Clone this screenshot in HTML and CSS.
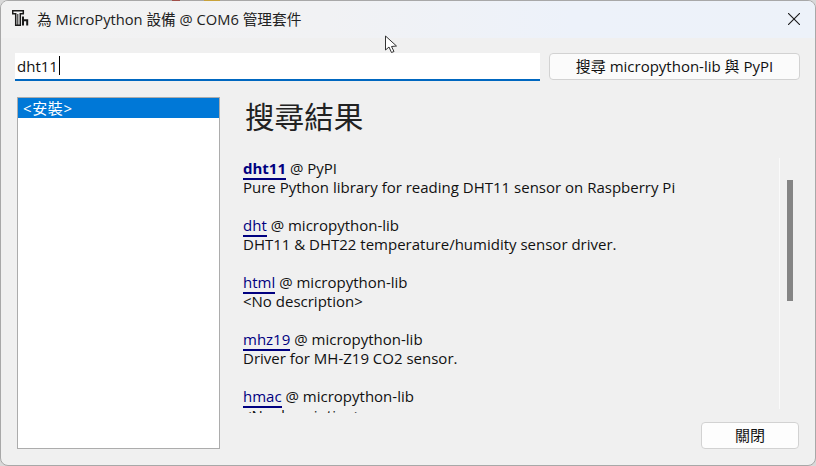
FILE: index.html
```html
<!DOCTYPE html>
<html lang="zh-Hant">
<head>
<meta charset="utf-8">
<title>為 MicroPython 設備 @ COM6 管理套件</title>
<link rel="stylesheet" href="styles.css">
</head>
<body>
<div class="window">
  <header class="titlebar">
    <svg class="app-icon" width="17" height="16" viewBox="0 0 17 16" fill="none" stroke="#1a1a1a">
      <path d="M.7 .8V3.800H3.700V15.200H8.300V3.800H11.300V.8z" stroke-width="1.500"/>
      <path d="M5.800 4V15" stroke-width="1"/>
      <path d="M11 6.500V15.500M11 10.200H15.200V15.500" stroke-width="2"/>
    </svg>
    <span class="title">為 MicroPython 設備 @ COM6 管理套件</span>
    <svg class="close-icon" width="12" height="12" viewBox="0 0 12 12" stroke="#1a1a1a" stroke-width="1.100"><path d="M0 0L12 12M12 0L0 12"/></svg>
  </header>
  <main class="content">
    <div class="search-row">
      <div class="search-input"><span>dht11</span><i class="caret"></i></div>
      <button class="btn search-btn">搜尋 micropython-lib 與 PyPI</button>
    </div>
    <div class="panes">
      <div class="list"><div class="list-item">&lt;安裝&gt;</div></div>
      <div class="details">
        <h1 class="heading">搜尋結果</h1>
        <div class="results-wrap">
          <div class="results">
            <p class="result"><a class="top">dht11</a> @ PyPI<br>Pure Python library for reading DHT11 sensor on Raspberry Pi</p>
            <p class="result"><a>dht</a> @ micropython-lib<br>DHT11 &amp; DHT22 temperature/humidity sensor driver.</p>
            <p class="result"><a>html</a> @ micropython-lib<br>&lt;No description&gt;</p>
            <p class="result"><a>mhz19</a> @ micropython-lib<br>Driver for MH-Z19 CO2 sensor.</p>
            <p class="result"><a>hmac</a> @ micropython-lib<br>&lt;No description&gt;</p>
          </div>
          <div class="scrollbar"><div class="thumb"></div></div>
        </div>
        <div class="actions"><button class="btn close-btn">關閉</button></div>
      </div>
    </div>
  </main>
</div>
<i class="sliver sliver-red"></i>
<i class="sliver sliver-yellow"></i>
<svg class="pointer" width="15" height="19" viewBox="0 0 15 19"><path d="M1.500 1V15L5 12L7.500 17.500L10 16.500L7.500 11.500L12.500 11z" fill="#fff" stroke="#333" stroke-width="1"/></svg>
</body>
</html>
```
FILE: styles.css
```css
* { box-sizing: border-box; }
html, body { margin: 0; padding: 0; }
body {
  width: 816px;
  height: 466px;
  overflow: hidden;
  position: relative;
  background: #d9d9d9;
  font-family: "Open Sans", "Noto Sans CJK TC", sans-serif;
  font-size: 15px;
  color: #111;
}
.window {
  width: 816px;
  height: 466px;
  display: flex;
  flex-direction: column;
  background: #f0f0f0;
  border: 1px solid #a8a8a8;
  border-radius: 8px;
  overflow: hidden;
}
.titlebar {
  flex: none;
  height: 37px;
  display: flex;
  align-items: center;
  padding: 0 15px 1px 11px;
  background: linear-gradient(90deg, #f2f2f2 0%, #f1f2f4 40%, #edf2fa 70%, #edf2f9 100%);
}
.app-icon { flex: none; margin: 0 8px 2px 0; }
.title { flex: 1; font-size: 14.700px; color: #222; margin-bottom: 2px; }
.content {
  flex: 1;
  min-height: 0;
  display: flex;
  flex-direction: column;
  padding: 15px 15px 16px 14px;
}
.search-row { display: flex; gap: 9px; height: 28px; }
.search-input {
  width: 525px;
  height: 28px;
  display: flex;
  align-items: center;
  padding: 0 0 1px 2px;
  background: #fff;
  border-bottom: 2px solid #0067c0;
  font-size: 15px;
}
.caret { width: 1px; height: 19px; margin-left: 1px; background: #000; }
.btn {
  font: inherit;
  color: #111;
  padding: 0 0 2px;
  background: #fbfbfb;
  border: 1px solid #d2d2d2;
  border-radius: 4px;
}
.search-btn { width: 251px; height: 27px; font-size: 15px; }
.panes { flex: 1; min-height: 0; display: flex; margin-top: 16px; padding-left: 2px; }
.list {
  flex: none;
  width: 203px;
  background: #fff;
  border: 1px solid #acacac;
}
.list-item {
  height: 20px;
  line-height: 20px;
  padding-left: 5px;
  background: #0078d7;
  color: #fff;
  font-size: 15px;
  letter-spacing: 0.600px;
}
.details { flex: 1; min-width: 0; display: flex; flex-direction: column; padding-left: 23px; }
.heading {
  margin: 0 0 0 2px;
  height: 41px;
  font-weight: 400;
  font-size: 29.600px;
  line-height: 40px;
  color: #222;
}
.results-wrap { flex: none; height: 273px; display: flex; margin-top: 21px; }
.results { width: 536px; height: 255px; padding-top: 1px; overflow: hidden; }
.result { margin: 0 0 19px; line-height: 19px; font-size: 15px; white-space: nowrap; }
.result a { color: #000080; border-bottom: 2px solid #000080; }
.result a.top { font-weight: 700; }
.scrollbar {
  flex: none;
  width: 18px;
  height: 251px;
  border-left: 1px solid #fafafa;
  padding: 22px 0 0 7px;
}
.thumb { width: 6px; height: 121px; background: #858585; }
.actions { display: flex; justify-content: flex-end; padding-right: 1px; margin-top: -9px; }
.close-btn { width: 98px; height: 27px; background: #fdfdfd; }
.sliver { position: absolute; top: 0; height: 1px; }
.sliver-red { left: 172px; width: 8px; background: #a0504a; }
.sliver-yellow { left: 204px; width: 16px; background: #c8a23a; }
.pointer { position: absolute; left: 384px; top: 35px; }
```
